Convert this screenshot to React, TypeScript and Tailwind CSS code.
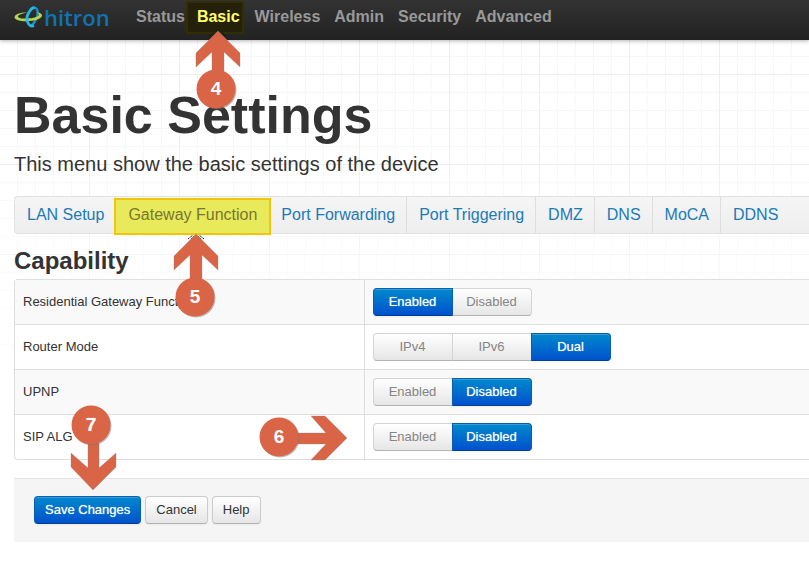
import clsx from 'clsx'

const navItems = ['Status', 'Basic', 'Wireless', 'Admin', 'Security', 'Advanced']

const tabs = [
  'LAN Setup',
  'Gateway Function',
  'Port Forwarding',
  'Port Triggering',
  'DMZ',
  'DNS',
  'MoCA',
  'DDNS',
]

const settings = [
  { label: 'Residential Gateway Function', options: ['Enabled', 'Disabled'], value: 'Enabled' },
  { label: 'Router Mode', options: ['IPv4', 'IPv6', 'Dual'], value: 'Dual' },
  { label: 'UPNP', options: ['Enabled', 'Disabled'], value: 'Disabled' },
  { label: 'SIP ALG', options: ['Enabled', 'Disabled'], value: 'Disabled', step: true },
]

interface StepMarkerProps {
  step: number
  width: number
  height: number
  cx: number
  cy: number
  arrow: string
  ticks?: boolean
  className: string
}

function StepMarker({ step, width, height, cx, cy, arrow, ticks, className }: StepMarkerProps) {
  return (
    <svg
      width={width}
      height={height}
      className={clsx('pointer-events-none absolute z-10 max-w-none overflow-visible', className)}
    >
      {ticks && (
        <path
          d="M14 5L19 1M17 5L20 2M30 5L25 1M27 5L24 2"
          stroke="#111"
          strokeWidth="1"
          strokeDasharray="2 1"
        />
      )}
      <path d={arrow} fill="#da6446" stroke="#8d8d8d" strokeOpacity="0.5" strokeWidth="0.7" />
      <circle cx={cx + 1} cy={cy + 1} r="19.5" fill="#777" fillOpacity="0.5" />
      <circle cx={cx} cy={cy} r="19.5" fill="#da6446" />
      <text
        x={cx}
        y={cy + 6}
        textAnchor="middle"
        fill="#fff"
        className="font-['Liberation_Sans',Arial,sans-serif] text-[19px] font-bold"
      >
        {step}
      </text>
    </svg>
  )
}

function Logo() {
  return (
    <a href="#" className="flex items-center text-[#1272b4]">
      <svg width="30" height="24" viewBox="0 0 30 24" fill="none" className="shrink-0">
        <path
          d="M16 5C18 2 21.500 1.500 23 4.500C25.500 9.500 21 18 17 21"
          stroke="#1b8fc6"
          strokeWidth="2.400"
        />
        <path
          d="M13 7.500C6 7.500 0.500 9.500 0.500 12.200C1 18 26.500 17.500 28 10.800C28.300 9 26 7.600 22.500 7.200C25 8.500 25.500 9.800 24.500 10.800C20.500 14.200 5 14.500 4 11.700C3.700 10.300 7 8.500 13 7.500Z"
          fill="#b5d64a"
        />
        <path
          d="M20.500 2.200C15.500 4 12 11 13.200 16C14.200 20 17 22 20 20.500"
          stroke="#27b5e4"
          strokeWidth="2.800"
        />
      </svg>
      <span className="font-['Open_Sans',sans-serif] text-[22px] leading-6 font-semibold">
        hitron
      </span>
    </a>
  )
}

function OptionGroup({ label, options, value }: { label: string; options: string[]; value: string }) {
  return (
    <div role="group" aria-label={label} className="flex">
      {options.map((option) => (
        <button
          key={option}
          type="button"
          aria-pressed={option === value}
          className={clsx(
            'h-7 w-20 border text-[13px] leading-5 not-first:-ml-px first:rounded-l last:rounded-r',
            option === value
              ? 'relative border-[#0a5cb0] border-b-[#003f97] bg-linear-to-b from-[#0088cc] to-[#0050cc] text-white shadow-[inset_0_1px_0_rgba(255,255,255,0.2),0_1px_2px_rgba(0,0,0,0.05)] text-shadow-[0_0_1px_#ffffffaa]'
              : 'border-[#d4d4d4] border-b-[#b3b3b3] bg-linear-to-b from-white to-[#e6e6e6] text-[#858585]',
          )}
        >
          {option}
        </button>
      ))}
    </div>
  )
}

export default function App() {
  return (
    <div className="min-h-screen bg-white bg-[linear-gradient(to_bottom,transparent_160px,#fff_380px),linear-gradient(to_right,transparent_89px,#eeeeee_89px),linear-gradient(to_bottom,transparent_89px,#eeeeee_89px),linear-gradient(to_right,transparent_17px,#f7f7f7_17px),linear-gradient(to_bottom,transparent_17px,#f7f7f7_17px)] bg-[length:100%_100%,90px_90px,90px_90px,18px_18px,18px_18px] bg-[position:0_0,0_0,0_-15px,0_0,0_3px] font-['Liberation_Sans',Arial,sans-serif] text-[13px] leading-5 text-[#333333]">
      <header className="flex h-10 items-start bg-linear-to-b from-[#333333] to-[#222222] pl-3.5 shadow-[0_1px_4px_rgba(0,0,0,0.3)]">
        <div className="w-[115px] shrink-0 pt-[5px]">
          <Logo />
        </div>
        <nav className="flex">
          {navItems.map((item) =>
            item === 'Basic' ? (
              <a
                key={item}
                href="#"
                aria-current="page"
                className="relative mt-px mr-1 -ml-1.5 h-[33px] border-2 border-[#322e04] bg-[#232109] pt-0.5 pr-0.5 pl-[9px] text-base leading-6 font-bold text-[#ffff66]"
              >
                {item}
                <StepMarker
                  step={4}
                  width={44}
                  height={78}
                  cx={20}
                  cy={58}
                  arrow="M22 0L44 22V36L28 21V50H16V21L0 36V22Z"
                  ticks
                  className="top-7 left-2"
                />
              </a>
            ) : (
              <a
                key={item}
                href="#"
                className="px-[7px] pt-[5px] text-base leading-6 font-bold text-[#999999]"
              >
                {item}
              </a>
            ),
          )}
        </nav>
      </header>

      <main className="pt-11 pl-3.5">
        <h1 className="text-[52px] leading-[62px] font-bold">Basic Settings</h1>
        <p className="mt-[3px] text-xl leading-[30px]">This menu show the basic settings of the device</p>

        <nav className="mt-[17px] h-[38px] rounded-l border border-r-0 border-[#e2e2e2] bg-linear-to-b from-[#f5f5f5] to-[#eeeeee]">
          <ul className="flex h-full text-base leading-9 whitespace-nowrap">
            {tabs.map((tab) =>
              tab === 'Gateway Function' ? (
                <li key={tab} className="relative -mr-0.5 -ml-0.5">
                  <a
                    href="#"
                    aria-current="page"
                    className="mt-px block h-[37px] border-2 border-[#f2c40c] bg-[#e8ea5c] px-3 leading-[30px] text-[#77772e]"
                  >
                    {tab}
                  </a>
                  <StepMarker
                    step={5}
                    width={44}
                    height={83}
                    cx={21}
                    cy={63}
                    arrow="M22 0L44 22V36L28 21V50H16V21L0 36V22Z"
                    ticks
                    className="top-[37px] left-[60px]"
                  />
                </li>
              ) : (
                <li key={tab} className="border-r border-[#dddddd] last:border-r-0">
                  <a href="#" className="block pr-[11px] pl-3 text-[#1b7ab8]">
                    {tab}
                  </a>
                </li>
              ),
            )}
          </ul>
        </nav>

        <h2 className="mt-[9px] text-2xl leading-9 font-bold">Capability</h2>

        <div className="rounded-l border border-r-0 border-[#dddddd] bg-white">
          <table className="w-full table-fixed">
            <tbody>
              {settings.map(({ label, options, value, step }) => (
                <tr
                  key={label}
                  className="h-[45px] border-b border-[#dddddd] first:h-11 last:border-b-0 odd:bg-[#f9f9f9]"
                >
                  <th scope="row" className="relative w-[349px] px-2 text-left font-normal">
                    {label}
                    {step && (
                      <StepMarker
                        step={6}
                        width={88}
                        height={44}
                        cx={20}
                        cy={21}
                        arrow="M88 22L66 44H52L67 28H38V17H67L52 0H66Z"
                        className="top-px right-[17px]"
                      />
                    )}
                  </th>
                  <td className="border-l border-[#dddddd] px-2">
                    <OptionGroup label={label} options={options} value={value} />
                  </td>
                </tr>
              ))}
            </tbody>
          </table>
        </div>

        <div className="mt-[18px] flex gap-1 border-t border-[#e5e5e5] bg-[#f5f5f5] px-5 pt-[17px] pb-[18px]">
          <button
            type="button"
            className="relative h-7 rounded border border-[#0a5cb0] border-b-[#003f97] bg-linear-to-b from-[#0088cc] to-[#0050cc] px-2.5 text-white shadow-[inset_0_1px_0_rgba(255,255,255,0.2),0_1px_2px_rgba(0,0,0,0.05)] text-shadow-[0_0_1px_#ffffffaa]"
          >
            Save Changes
            <StepMarker
              step={7}
              width={45}
              height={85}
              cx={20}
              cy={20}
              arrow="M22 85L45 62V48L28 63V38H17V63L0 48V62Z"
              className="bottom-[33px] left-9"
            />
          </button>
          {['Cancel', 'Help'].map((label) => (
            <button
              key={label}
              type="button"
              className="h-7 rounded border border-[#cccccc] border-b-[#b3b3b3] bg-linear-to-b from-white to-[#e6e6e6] px-2.5 shadow-[0_1px_2px_rgba(0,0,0,0.05)]"
            >
              {label}
            </button>
          ))}
        </div>
      </main>
    </div>
  )
}
